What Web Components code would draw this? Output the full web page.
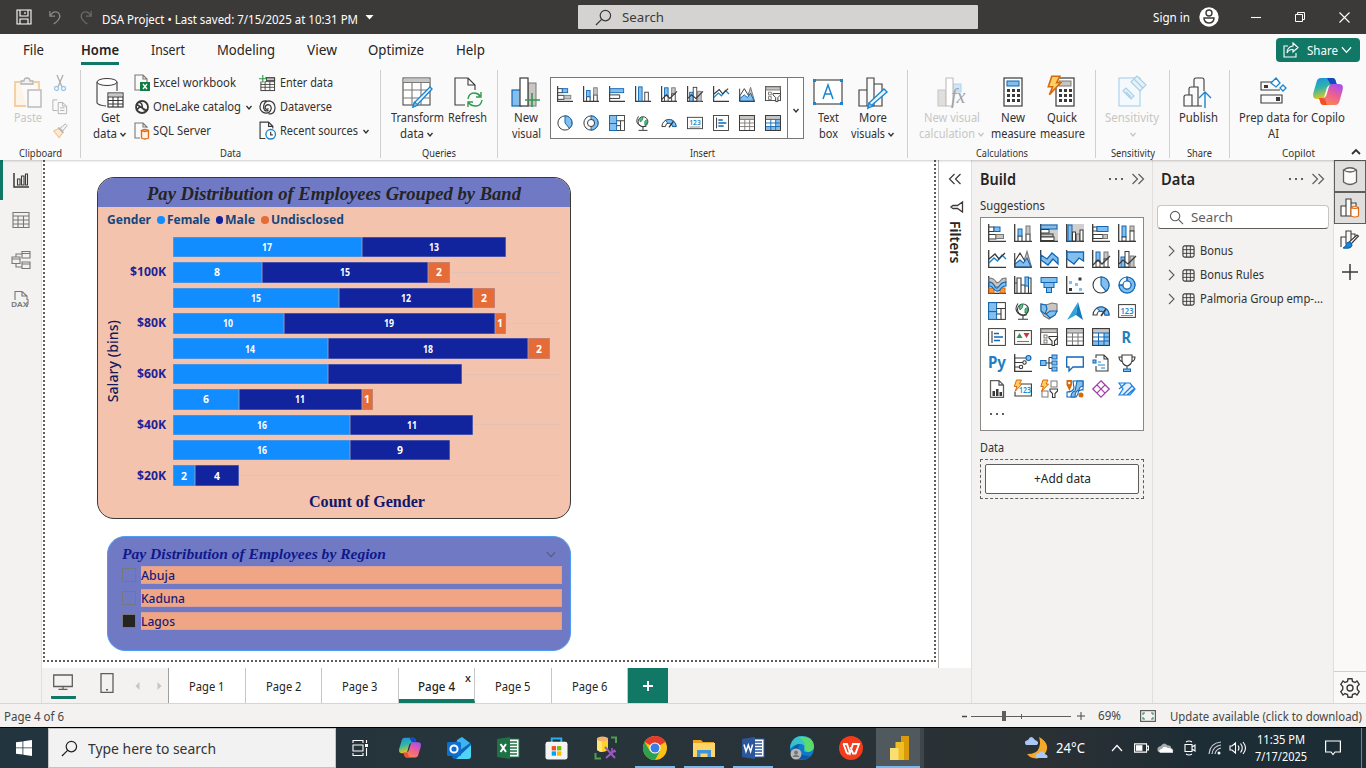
<!DOCTYPE html>
<html lang="en">
<head>
<meta charset="utf-8">
<title>DSA Project</title>
<style>
html,body{margin:0;height:100%;overflow:hidden}
body{font:12px/16px "Noto Sans","Open Sans",sans-serif;color:#323130;background:#f3f2f1}
</style>
</head>
<body>
<report-app></report-app>
<script>
const K='#3b3a39',B='#0f67b5',F='#83beec',G='#c8c6c4',S='#7a7876',N='none';
const r=(x,y,w,h,f=N,s=N,sw=1)=>`<rect x="${x}" y="${y}" width="${w}" height="${h}" fill="${f}" stroke="${s}" stroke-width="${sw}"/>`;
const p=(d,s=K,f=N,w=1.1)=>`<path d="${d}" stroke="${s}" fill="${f}" stroke-width="${w}"/>`;
const c=(x,y,q,f=N,s=N,w=1.1)=>`<circle cx="${x}" cy="${y}" r="${q}" fill="${f}" stroke="${s}" stroke-width="${w}"/>`;
const ax=p('M.7 0V17.3H18',K,N,1.3);
const bolt=(x,y)=>`<path transform="translate(${x} ${y})" d="M3 .5H8L6 4.5H8.5L1.5 12L3.5 7H.8Z" fill="#fcd066" stroke="#d8690a"/>`;
const copilot=(id)=>`<defs><linearGradient id="${id}a" x1="0" y1="0" x2=".3" y2="1"><stop offset="0" stop-color="#1f8be8"/><stop offset=".5" stop-color="#2fb5a8"/><stop offset="1" stop-color="#e8c71f"/></linearGradient><linearGradient id="${id}b" x1=".8" y1="0" x2=".3" y2="1"><stop offset="0" stop-color="#a64ff0"/><stop offset=".5" stop-color="#ee5f92"/><stop offset="1" stop-color="#fb8a4c"/></linearGradient></defs>
<path d="M8 1H19C22 1 22.5 3 23 5L24 8H18C15 8 14 10 13.200 13L11.500 19C11 21 10 22 8 22H4C0 22-.5 19 .6 15L3.500 5C4.200 2.500 5.500 1 8 1Z" fill="url(#${id}a)"/><path d="M14 1H19C22 1 22.500 3 23 5L24 8H19.500C18 8 17 7 16.500 5.500Z" fill="#1549c0"/><path d="M22 28H11C8 28 7.500 26 7 24L6 21H9C12 21 13 19.500 13.800 17L16 9.500C16.600 8 17.500 7 19.500 7H26C30 7 30.500 10 29.400 14L26.500 24C25.800 26.500 24.500 28 22 28Z" fill="url(#${id}b)"/><path d="M12 22L14 28H11C8 28 7.500 26 7 24L6 21H9Z" fill="#f0502c"/>`;
const tableI=(last)=>r(.6,.6,16.8,16.8,'#fff',K)+(last?r(12,5,5,12,F)+r(1,13,12,4,F):'')+r(1,1,16,4,G)+p('M.6 5H17.400M.6 9H17.400M.6 13H17.400M6.500 5V17.400M12 5V17.400',last?B:S,N,1)+r(.6,.6,16.8,16.8,N,K);
const funnelS=p('M9 8.500H17.500V10L14.500 13V17.500H12V13L9 10Z',K,'#fff');
const lab123=(x,y,s,w)=>`<text x="${x}" y="${y}" font-size="${s}" font-weight="600" font-family="Noto Sans" textLength="${w}" lengthAdjust="spacingAndGlyphs" fill="#1a86d0">123</text>`;
const ICONS={
stackbar:[18,18,ax+p('M1 3H6V7.500H1M1 10.500H8V15H1')+r(6,3,6,4.500,F,B)+r(8,10.500,7.500,4,G,S)],
stackcol:[18,18,ax+p('M4 17V12H8V17M12 17V10H16V17')+r(4,5,4,7,F,B)+r(12,2,4,8,G,S)],
clusbar:[18,18,r(0,0,18,18,'#d2d0ce')+ax+r(1,1,16,4,F,B)+r(1,5.500,8,3.500,'#fff',K)+r(1,10,12,3,G,K)+r(1,13,13,3.500,'#fff',K)],
cluscol:[18,18,r(0,0,18,18,'#d2d0ce')+ax+r(2,1,4,16,F,B)+r(6.500,8,3,9,'#fff',K)+r(10.500,10,3,7,G,S)+r(14,6,3,11,'#fff',K)],
bar2:[18,18,ax+r(1,3,15.500,4.500,F,B)+p('M1 10H12V14H1')],
col2:[18,18,ax+r(4,1,4,16,F,B)+r(11,7,4,10,'#fff',K)],
bar100:[18,18,ax+r(1,3,4,4,'#fff',K)+r(5,2.500,11,5,F,B)+r(1,10.500,10,4,'#fff',K)+r(11,10.500,4.500,4,G,S)],
col100:[18,18,ax+r(4,2,4,11,F,B)+r(4,13,4,4,'#fff',K)+r(12,2,4,5,G,S)+r(12,7,4,10,'#fff',K)],
line:[18,18,ax+p('M1 13L6 8L9.500 11L14 5L18 9','#1a86d0',N,1.400)+p('M1 9L7 4L11 9L17 3',K,N,1.300)],
area:[18,18,p('M8 17L13 1.500L17.500 17Z',S,G)+p('M1 11L6 3L12 13V17H1Z',K,'#fff')+p('M1 17V14L6 10L9.500 13L13 8L17 17Z',B,F)+p('M.7 3V17.300H18')],
sarea:[18,18,ax+p('M1 5L7 9L12 3L18 8V14L13 9L8 15L1 10Z',B,F,1.3)],
area100:[18,18,ax+p('M1 2H17.500V11L13 8L8 14L1 9Z',B,F,1.3)],
linestack:[18,18,ax+r(4,2,4,9,F,B)+r(12,2,4,7,G,S)+r(4,11,4,6,'#fff',K)+r(12,9,4,8,'#fff',K)+p('M1 15L6 10L10 14L18 6',K,N,1.3)],
linecol:[18,18,ax+r(3,7,4,10,F,B)+r(7,1.500,4,15.500,'#fff',K)+r(12,6,4,11,G,S)+p('M1 14L5 10L10 14L18 6',K,N,1.3)],
ribbon:[18,18,ax+r(1,12,5,5,'#f29a3f','#d8690a')+r(12,12,5,5,'#f29a3f','#d8690a')+p('M1 2Q6 2 8 6Q10 8 13 4Q14 2 18 2V6Q14 7 12 10Q8 13 5 8Q4 6 1 6Z',S,G)+p('M1 6Q5 6 7 11Q9 14 12 9Q14 6 18 6V10Q14 10 12 14Q8 17 5 12Q4 10 1 10Z',B,F)],
waterfall:[18,18,ax+p('M3 17V2H7V17M3 7H1M11 17V9H7M11 9V17M14.500 17V2H17V17')+r(11,1,3.500,9,F,B)],
funnel:[18,18,r(1,1.500,16,5,F,B)+r(4,6.500,10,5,F,B)+r(6.500,11.500,5,5,F,B)],
scatter:[18,18,ax+r(3,5,3,3,F)+r(9,7,3,3,F)+r(13,12,3,3,F)+r(12.500,1.500,3,3,K)+r(3,12,3,3,K)],
pie:[18,18,c(9,9,8,'#fff',K)+p('M9 9V1A8 8 0 0 1 14 15.200Z',B,F)],
donut:[18,18,c(9,9,8,'#fff',B)+p('M9 1A8 8 0 1 1 1 9H5A4 4 0 1 0 9 5Z',B,F)+c(9,9,4,'#fff',B)+p('M9 1V5M1 9H5',B)],
donut2:[18,18,c(9,9,8,'#fff',K)+p('M9 1A8 8 0 0 1 9 17V13A4 4 0 0 0 9 5Z',B,F)+c(9,9,4,'#fff',K)],
treemap:[18,18,r(.6,.6,16.800,16.800,'#fff',K)+r(.6,.6,8,9,F,B)+r(.6,9.600,8,7.800,F,B)+p('M8.600 6.500H17.400M13 6.500V17.400M8.600 12H13')],
globe:[18,18,c(9,7.500,5.500,'#fff',K)+p('M5 4Q8 1 9 3Q9 6 6 8ZM11 7Q14 4 14 7Q14 11 11 11Z','#107c41','#5cc08a',.8)+p('M4 1.500Q0 7 4 11Q8 15 13 12.500M9 13V17M4 17.300H14')],
fmap:[18,18,p('M1 2L6 3L12 1L17 2V9L13 14L9 17L4 14L1 9Z',S,G)+p('M1 2L6 3L7 7L5 12L1 9ZM10 9H17L15 13L10 16L6 12Z',B,F)],
azure:[18,18,`<path d="M12 0L1 18L10 13Z" fill="#2fa4dc"/><path d="M12 0L17 18L10 13Z" fill="#1479b8"/>`],
gauge:[18,18,p('M1 13A8 8 0 0 1 17 13H13A4 4 0 0 0 5 13Z',K,'#fff')+p('M5 6A8 8 0 0 1 17 13H13A4 4 0 0 0 8 9.500Z',B,F)+p('M9 14L14 7',K,N,1.600)],
card:[18,18,r(.6,2.600,16.800,12.800,'#fff',K)+lab123(2.5,11.500,8,13)+p('M3 13.500H15',S,N,.9)],
multirow:[18,18,r(.6,.6,16.800,16.800,'#fff',K)+p('M4 3V15',K)+p('M6 5.500H11M6 9H15M6 12.500H12',B,N,1.700)],
kpi:[18,18,r(.6,2.600,16.800,13.800,'#fff',K)+`<path d="M2.500 10L5.500 5L8.500 10Z" fill="#2e9a4b"/><path d="M9.500 5H15.500L12.500 10Z" fill="#d13438"/>`+p('M3 13.500H15',S)],
slicer:[18,18,r(.6,.6,16.800,15.800,'#fff',K)+r(1,1,16,3.500,G,S)+r(4,7,3,3,N,S)+r(4,12,3,3,N,S)+funnelS],
table:[18,18,tableI(0)],matrix:[18,18,tableI(1)],
R:[18,18,`<text x="3.500" y="14.500" font-size="15.500" font-weight="700" font-family="Noto Sans" textLength="9.500" lengthAdjust="spacingAndGlyphs" fill="#1f7fc2">R</text>`],
Py:[18,18,`<text x="0" y="14" font-size="15.500" font-weight="700" font-family="Noto Sans" textLength="18" lengthAdjust="spacingAndGlyphs" fill="#1f7fc2">Py</text>`],
keyinf:[18,18,ax+p('M1 4H13M1 8.500H9M1 13H6',K)+c(14.500,4,2.500,F,B)+c(10.500,8.500,1.700,'#fff',K)+c(7,13,1.700,'#fff',K)],
decomp:[18,18,p('M6 9H9M9 3.500V14.500M9 3.500H12M9 9H12M9 14.500H12')+r(.6,6.500,5.400,5,F,B)+r(12,1,5,4,F,B)+r(12,7,5,4,F,B)+r(12,13,5,4,F,B)],
qna:[18,18,p('M.7 3H17.300V13H7L3 17V13H.7Z',B,'#fff',1.300)],
narr:[18,18,p('M4 4V1H12L16 5V17H4V12M12 1V5H16',K)+r(1,6,3,3,F,B)+p('M6 8H9M6 11H13M9 14H13','#1a86d0')],
trophy:[18,18,p('M4 1H14V7Q13 11 9 12Q5 11 4 7ZM4 3H1Q1 7 5 8M14 3H17Q17 7 13 8M9 12V15')+r(5.500,15,7,2.500,F,B)],
pagin:[18,18,p('M2.500 .6H11L15.500 5V17.400H2.500ZM11 1V5H15','#605e5c','#fff',1.300)+r(4.500,11,2.500,5,K)+r(8,9,2.500,7,K)+r(11.500,12,2.500,4,K)],
cardn:[18,18,p('M7 4H17.400V16H1V12',K,'#fff')+lab123(5,13,9,12)+bolt(-.5,-.5)],
slicern:[18,18,r(11,1,6,6,'#fff',S)+r(2,11,6,6,'#fff',S)+p('M10 9H17.500V11L15 13.500V17.500H12.500V13.500L10 11Z',K,'#fff')+bolt(0,-.5)],
arcgis:[18,18,p('M7 1H17V10Q12 9 12 14L10 17H1V12Q7 12 8 8Z',B,'#fff')+p('M11 1H17V6Q13 7 13 10Q9 11 9 17H5Q5 12 9 11Z',B,F)+`<path d="M.5 0H6V5L3.500 11L.5 5Z" fill="#d8690a"/>`+c(3.200,3,1.200,'#fff')+c(15,15,2.500,'#d8690a')],
papps:[18,18,`<path d="M9 .8L17.200 9L9 17.200L.8 9ZM4.900 4.900L13.100 13.100M13.100 4.900L4.900 13.100" fill="#fff" stroke="#a33fa8" stroke-width="1.300"/>`],
automate:[18,18,p('M1 3H12L17 9L12 15H1L5 9ZM1 9L8 3M5 15L14 6M9 15L16 9','#1a7fe0','#e5f1fd',1.200)],
// ribbon
paste:[30,32,p('M7 5H2V29H13M21 5H26V12','#f4cda0','#fdf3e6',1.800)+p('M8 7V4H11Q11 1 14 1Q17 1 17 4H20V7Z','#b5b3b1','#f3f2f1',1.300)+r(15,13,13,17,'#fafafa','#b5b3b1',1.300)],
cut:[16,18,p('M5 1L10 13M11 1L6 13','#b0aeac',N,1.300)+c(4.500,14.500,2,N,'#9fc8e8',1.300)+c(11.500,14.500,2,N,'#9fc8e8',1.300)],
copy:[18,18,p('M6 13H1V1H6','#b5b3b1')+p('M7 4H12L16.500 8V16.500H7ZM12 4V8H16M9 10H14M9 13H14','#b5b3b1')],
brush:[18,18,p('M2 9L8 6L12 11L8 16.500Z','#f2c391','#fce9d2',1.300)+p('M9 6L15 1L17 3L12 9Z','#b5b3b1','#f3f2f1')+p('M7 5L13 11','#b5b3b1',N,1.500)],
getdata:[30,32,p('M2 5V26Q4 28.500 11 29M22 5V14')+`<ellipse cx="12" cy="5" rx="10" ry="3.500" fill="#fff" stroke="${K}"/>`+r(13,16,15,14,'#fff',K,1.200)+r(13.500,16.500,14,3,G)+p('M13 20H28M13 23.500H28M13 27H28M18 20V30M23 20V30')],
excel:[16,18,p('M6 16H1V1H9L13 5V8M9 1V5H13',S)+r(6,8,10,9,'#107c41')+p('M9 10L13 15M13 10L9 15','#fff',N,1.300)],
onelake:[16,18,c(8,9,6,N,K,1.800)+p('M2 6L13 13M4 4Q9 5 8 9Q10 14 14 11M3 12Q5 8 9 9',K,N,1.500)],
sql:[16,18,p('M6 16H1V1H9L13 5V6M9 1V5H13',S)+p('M7.500 8.500V16Q11 18 14.500 16V8.500Q11 10.500 7.500 8.500Q11 6.500 14.500 8.500','#e06c12','#fdf0e4',1.300)],
enter:[18,18,r(2,3,14.500,13.500,'#fff',K)+r(8,3,8.500,3,G,K)+p('M2 7H16.500M2 10H16.500M2 13H16.500M6.500 7V16.500M11.500 7V16.500',K,N,.9)+r(0,0,6.500,7,'#fafafa')+p('M4 0V8M0 4H8','#2e9a4b',N,1.200)],
dverse:[18,18,p('M8 2Q2 1 1 8Q1 14 7 15Q12 15 13 10Q13 6 9 6Q6 7 6.500 10Q8 12 10 10M10 15.500Q16 17 17 10Q17 3 11 2Q6 2 5 7Q4 10 6 12Q8 13 10 12',K,N,1.300)],
recent:[16,18,p('M6 16.500H1V1H9L13 5V7M9 1V5H13')+c(11,12.500,4.500,'#fff','#1a86d0',1.300)+p('M11 10V13H13',K)],
transform:[30,32,r(1,1,27,27,'#fff',K)+r(1.500,1.500,26,3.500,G)+p('M1 5.500H28M1 13H28M1 21H28M10 5V28M19 5V28',S)+p('M28 10L30 12L15 28L11 30L12 26Z','#1a86d0','#eaf5fd',1.400)+p('M11 30L12.500 25L16 28Z','#1a86d0',F)],
refresh:[30,32,p('M13 28H3V1H16L23 8V13M16 1V8H23')+p('M16 22Q17 16 22 16Q26 16 28 19M29 15V20H24M30 23Q29 29 24 29Q19 29 17 26M16 30V25H21','#2e9a4b',N,1.400)],
newvis:[30,32,r(1,13,9,16,F,B,1.200)+r(17,6,8,23,G,S)+r(9,1,8,28,'#fff',K,1.200)+p('M21 16V30M14 23H29','#2e9a4b',N,1.600)],
textbox:[30,32,r(1,3,28,24,'#fff',K,1.100)+r(0,2,3,3,'#1a86d0')+r(27,2,3,3,'#1a86d0')+r(0,25,3,3,'#1a86d0')+r(27,25,3,3,'#1a86d0')+p('M10 22L15 8L20 22M12 17H18','#1a86d0',N,1.500)],
morevis:[30,32,p('M1 29V13H9V29ZM9 13V1H16V29H9M16 7H24V29H16')+p('M26 12L29 15L14 28L10 31L11 26Z','#1a86d0','#eaf5fd',1.400)+p('M10 31L11 26L15 29Z','#1a86d0',F)],
newcalc:[30,32,p('M1 29V13H9V29Z','#c8c6c4','#e1dfdd')+p('M16 7H24V15H16Z','#b0d4ee','#cfe6f7')+p('M9 13V1H16V29H9Z','#c0bebc','#fff')+`<text x="14" y="26" font-family="Liberation Serif" font-style="italic" font-size="20" fill="#a5a3a1">fx</text>`],
calc:[30,32,r(6,1,18,28,'#fff',K,1.200)+r(9,4,12,5,F,B)+[13,18,23].map(y=>[9,14,19].map(x=>r(x,y-1,3,3,K)).join('')).join('')],
quick:[30,32,r(9,1,18,28,'#fff',K,1.200)+r(12,4,12,5,G,S)+[13,18,23].map(y=>[12,17,22].map(x=>r(x,y-1,3,3,K)).join('')).join('')+`<g transform="translate(0 -1.500) scale(1.600)">${bolt(0,0)}</g>`],
sens:[30,32,r(2,1,21,28,'#f4f9fd','#a9cfe8',1.100)+p('M17 2L20 -1L29 8L26 11ZM14 5L17 2L26 11L23 14Z','#a9cfe8','#e6f2fa',1.200)+p('M6 14L9 11L17 19L14 22ZM9 15L14 20','#a9cfe8','#e6f2fa')],
publish:[30,32,p('M1 29V20Q1 18 3 18H9V29ZM6 18V12Q6 10 8 10H15V29H9M11 10V3Q11 1 13 1H19Q21 1 21 3V14M15 29H19')+p('M22 31V16M16 21L22 15L28 21','#1a86d0',N,1.400)],
prep:[30,32,p('M17 5H3V13H22M3 18H24V26H3Z',K)+r(6,8,4,3,K)+r(18,20,4,4,K)+p('M18 1L22 6L18 10L13 6ZM25 8L28 11L25 14L22 11Z','#1a86d0','#fff',1.300)],
copilot:[30,30,copilot('c')],
// window
save:[16,16,p('M1 1H15V15H1ZM4 1V7H12V1M4 15V10H12V15M9 3V5','#fff')],
undo:[16,16,p('M2 1V6.500H7.500M2 6.500Q6 0 11 3Q16 8 6 15','#8a8886',N,1.300)],
redo:[16,16,p('M14 1V6.500H8.500M14 6.500Q10 0 5 3Q0 8 10 15','#6b6967',N,1.300)],
mag:[18,18,c(11,7,5.500,N,'currentColor',1.300)+p('M7 11L1 17','currentColor',N,1.300)],
mag2:[16,16,c(6.500,6.500,5,N,'currentColor',1.200)+p('M10 10L15 15','currentColor',N,1.200)],
user:[20,20,c(10,10,9.700,'#fff')+c(10,6,3,N,K,1.400)+p('M5 11H15V12Q14 16 10 16Q6 16 5 12Z',K,N,1.400)],
min:[10,10,p('M0 5.500H10','#fff')],max:[10,10,p('M.5 2.500H7.500V9.500H.5ZM2.500 2V.5H9.500V7.500H8','#fff',N,1)],close:[11,11,p('M.5 .5L10.500 10.500M10.500 .5L.5 10.500','#fff')],
caret:[8,5,`<path d="M0 0H8L4 4.500Z" fill="#fff"/>`],
chev:[8,6,p('M1.500 1L4 4L6.500 1','currentColor',N,1.300)],
chevw:[12,8,p('M1 1L6 6.500L11 1','currentColor',N,1.300)],
chevup:[10,7,p('M1 6L5 2L9 6','currentColor',N,1.800)],
share:[16,16,p('M5 4H1V15H13V11','#fff')+p('M10 1L15 5.500L10 10V7.500Q6 7 4 11Q4 5 10 4Z','#fff')],
// rails
rpt:[16,16,p('M1 1V15H16',K,N,1.500)+p('M4.500 13V7H7V13ZM8.500 13V4H11V13ZM12.500 13V2H14.500V13Z')],
rtable:[18,18,p('M1 1.500H17V16.500H1ZM1 5H17M1 9H17M1 13H17M6 5V16.500M11.500 5V16.500','#797775',N,1.100)],
model:[20,20,p('M11 1.500H19V8H11ZM11 12H19V18.500H11ZM1 7H9V13.500H1ZM11 3.500H19M11 14H19M1 9H9M5 7V4H11M5 13.500V17H11','#797775')],
dax:[20,20,p('M4 10V1.500H11L16 6V10M11 2V6H16','#797775')+`<text x="0" y="16.500" font-size="7.500" font-weight="600" font-family="Noto Sans" textLength="17" lengthAdjust="spacingAndGlyphs" fill="#797775">DAX</text>`+p('M17 9V14L15 17','#797775')],
desk:[20,16,p('M.7 1H19.300V12.500H.7ZM10 12.500V15.300M5.500 15.300H14.500','#605e5c',N,1.300)],
phone:[14,20,p('M1 .7H13V19.300H1Z','#605e5c',N,1.300)+r(6,16,2,1.500,'#605e5c')],
tril:[5,8,`<path d="M4.500 0V8L.5 4Z" fill="#c8c6c4"/>`],trir:[5,8,`<path d="M.5 0V8L4.500 4Z" fill="#c8c6c4"/>`],
dl:[14,12,p('M6.500 1L1.500 6L6.500 11M12.500 1L7.500 6L12.500 11','#3b3a39',N,1.200)],
dr:[14,12,p('M1.500 1L6.500 6L1.500 11M7.500 1L12.500 6L7.500 11','#605e5c',N,1.200)],
filt:[14,12,p('M12.500 1V11L7.500 7.500H3L1 6L3 4.500H7.500Z',K,N,1.300)],
dots:[16,4,r(1,1,2,2,'#605e5c')+r(7,1,2,2,'#605e5c')+r(13,1,2,2,'#605e5c')],
chr:[7,12,p('M1 1L6 6L1 11','#605e5c',N,1.100)],
grid:[14,14,`<rect x="1" y="1" width="12" height="12" rx="2" fill="none" stroke="${K}" stroke-width="1.200"/>`+p('M1 5H13M1 9H13M5 1V13M9 1V13',K,N,1)],
cyl:[16,20,p('M1.500 4V16Q8 21 14.500 16V4Q8 -.5 1.500 4Q8 8 14.500 4','#605e5c','#fafafa',1.300)],
bld:[20,20,p('M1 18V8H6V18ZM6 8V1H11V18H6M11 5H16V8',K,'#fff')+p('M11 9.500V18Q15 20 18.500 18V9.500Q15 7.500 11 9.500Q15 11.500 18.500 9.500','#e06c12','#fff',1.200)],
fmt:[20,20,p('M1 17V7H6V14M6 7V1H11V12M11 4H15V8')+p('M18.500 6L11 14L8 13L17 5Z',K,'#fff')+p('M10 12L12 15Q11 19 3 18Q6 17 7 13Z','#0f67b5','#1a86d0')],
plus:[18,18,p('M9 1V17M1 9H17',K,N,1.500)],
gear:[20,20,p('M7.500 3.500L8 .8H12L12.500 3.500L15 4.500L17 3L19.200 6.500L17.300 8.500V11.500L19.200 13.500L17 17L15 15.500L12.500 16.500L12 19.200H8L7.500 16.500L5 15.500L3 17L.8 13.500L2.700 11.500V8.500L.8 6.500L3 3L5 4.500Z',K,N,1.400)+c(10,10,3,N,K,1.400)],
fit:[16,12,r(.6,.6,14.800,10.800,N,'#605e5c',1.200)+p('M3 5V3H5M11 3H13V5M13 7V9H11M5 9H3V7','#2e8a5b')],
// taskbar
win:[16,16,`<path d="M0 2.300L6.500 1.400V7.500H0ZM7.300 1.300L16 0V7.500H7.300ZM0 8.300H6.500V14.600L0 13.700ZM7.300 8.300H16V16L7.300 14.700Z" fill="#fff"/>`],
tview:[17,16,p('M1 3V.5H11V3M1 13V15.500H11V13M1 5H11V11H1ZM14.500 0V3M14.500 8V16','#fff')+r(13,4,3,3,'#fff')],
outlook:[24,24,`<path d="M5 8L15 1L24 8V20Q24 23 21 23H8Q5 23 5 20Z" fill="#1066b8"/><path d="M10 4L15 1L23 7L12 15Z" fill="#3bb4f2"/><path d="M24 9V20Q24 23 21 23H9Z" fill="#4fd3f7"/><rect y="6" width="14" height="14" rx="1.500" fill="#0f6fd0"/>`+c(7,13,3.600,N,'#fff',2)],
xl:[24,24,r(12,3,11,18,'#fff','#1e7145')+p('M14 6H21M14 9H21M14 12H21M14 15H21M14 18H21','#1e7145',N,1.600)+`<path d="M1 3L14 1V23L1 21Z" fill="#1e7145"/>`+p('M4.500 8L10 16M10 8L4.500 16','#fff',N,2)],
store:[24,24,p('M7 6V1.500H17V6','#29b0ee',N,2)+`<rect x=".5" y="5" width="23" height="18.500" rx="2.500" fill="#f4f4f4"/>`+r(7,9.500,4.500,4.500,'#f25022')+r(12.500,9.500,4.500,4.500,'#7fba00')+r(7,15,4.500,4.500,'#00a4ef')+r(12.500,15,4.500,4.500,'#ffb900')],
ssms:[24,24,`<path d="M3 3V14Q8 18 14 14V3Z" fill="#fbd32e"/><path d="M3 3V14Q5.500 16 8 16V3Z" fill="#fde57a"/><ellipse cx="8.500" cy="3" rx="5.700" ry="2.500" fill="#f2b36c"/>`+p('M17 1.500H22V7M1.500 17V22.500H7','#4f9e4c',N,2)+p('M11 11L21 22M21 14L12 22','#9b59c0',N,2)+p('M18 12V15.500H22','#9b59c0',N,1.600)],
chrome:[24,24,c(12,12,12,'#fbc116')+`<path d="M12 12L1.600 6A12 12 0 0 1 22.400 6Z" fill="#e33b2e"/><path d="M12 0A12 12 0 0 1 22.400 6H12Z" fill="#e33b2e"/><path d="M1.600 6A12 12 0 0 0 12 24L17 15L12 12L7 15Z" fill="#2da14c"/>`+c(12,12,5.600,'#fff')+c(12,12,4.500,'#3b7de8')],
folder:[24,24,`<path d="M1 4H9L11 6H22V20H1Z" fill="#eca21c"/><rect x="1" y="7" width="22" height="14" fill="#fcd669"/><path d="M5 21V14H19V21H15.500V17.500H8.500V21Z" fill="#3f94dc"/>`],
word:[24,24,r(12,3,11,18,'#fff','#2b579a')+p('M14 6H21M14 9H21M14 12H21M14 15H21M14 18H21','#2b579a',N,1.400)+`<path d="M1 3L14 1V23L1 21Z" fill="#2b579a"/>`+p('M3 8.500L5 15.500L7.300 9L9.600 15.500L11.600 8.500','#fff',N,1.500)],
edge:[24,24,c(12,12,12,'#1278c8')+`<path d="M.5 9Q3 0 12 0Q23 0 24 10Q24 16 17 16Q13 16 14.500 13Q15 8 10 8Q4 8 .2 13Z" fill="#36c3c9"/><path d="M14 1Q23 2 24 10Q24 15 18 16L14.500 13Q17 5 8 1Z" fill="#5bdb6c"/><path d="M8 12Q10 21 20 20Q16 24 11 23.500Q2 22 2 14Q6 8 10 8Q8 10 8 12Z" fill="#0d56a6"/>`+c(6,18,5.500,'#b8b8b8')+c(6,16.500,2,'#777')+p('M3 21Q6 17 9 21','#777','#777')],
wps:[24,24,c(12,12,12,'#f33c1c')+p('M4 8H8L11 17L14 8H20L16.500 17.500H14L11.500 11M8 17.500H11M4.500 8L8 17.500','#fff',N,1.900)],
pbi:[20,24,r(11,0,8,24,'#d99a0c')+r(5.500,6,8.500,18,'#f0bf25')+r(0,12,8.500,12,'#f9de72')],
moon:[24,24,`<path d="M15 1Q26 7 22 16Q18 24 9 22Q5 21 3 18Q13 18 15 12Q17 7 15 1Z" fill="#f4a92a"/><path d="M2 9Q-1 5 4 4Q7-2 11 4Q16 6 13 9Z" fill="#a9c8f5"/><path d="M12 22Q10 18 15 17Q19 13 21 18Q25 20 23 22Z" fill="#a9c8f5"/>`],
up:[12,8,p('M1 7L6 1.500L11 7','#fff',N,1.200)],
batt:[16,10,p('M.6 .6H13.400V9.400H.6ZM13.400 3H15.400V7H13.400','#fff')+r(2,2,7,6,'#fff')],
cloud:[18,12,`<path d="M1 10Q-1 5 4 4Q7-1 11 3Q15 3 15 6Q19 8 16 10Z" fill="#a5acb0"/><path d="M3 11Q1 8 5 7Q8 3 11 6Q17 6 17 11Z" fill="#fff"/>`],
meet:[14,16,p('M2 4.500H9V11.500H2ZM9 7L12 5V11L9 9M3 2Q6 0 9 2M3 14Q6 16 9 14','#fff')],
wifi:[14,14,p('M1 13Q2 2 13 1M4 13Q5 5 13 4M7 13Q8 8 13 7','#c9ced1',N,1.200)+c(11,12,1.500,'#fff')],
sound:[18,14,p('M1 5H3L6.500 2V12L3 9H1ZM9 4.500Q11 7 9 9.500M11.500 2.500Q15 7 11.500 11.500M14 1Q19 7 14 13','#fff')],
notif:[16,16,p('M.6 1H15.400V12H10L8 14.500L6 12H.6Z','#fff',N,1.200)]
};
const def=(n,css,html)=>customElements.define(n,class extends HTMLElement{
 connectedCallback(){ if(this.shadowRoot) return;
  this.attachShadow({mode:'open'}).innerHTML=`<style>:host{display:block;box-sizing:border-box}*{box-sizing:border-box}${css}</style>`+(typeof html==='function'?html(this):html);}
});
const I=(n,w,h,st='')=>`<ui-icon name="${n}"${w?` w="${w}"`:''}${h?` h="${h}"`:''} style="${st}"></ui-icon>`;
const T=(t,w,st='')=>`<fit-text w="${w}" style="${st}">${t}</fit-text>`;
const row='display:flex;align-items:center;';

def('ui-icon',':host{display:block;flex:none}svg{display:block;overflow:visible}',e=>{
 const [a,b,m]=ICONS[e.getAttribute('name')],w=e.getAttribute('w')||a,h=e.getAttribute('h')||(w*b/a);
 return `<svg width="${w}" height="${h}" viewBox="0 0 ${a} ${b}">${m}</svg>`;});

def('title-bar',`:host{height:34px;background:#3b3a39;color:#fff;${row}padding-left:16px}
.search{width:400px;height:24px;margin:0 0 0 204px;background:#d4d3d1;color:#3b3a39;border-radius:1px;${row}padding-left:17px;font-size:13px}`,
`${I('save')}${I('undo',15,15,'margin-left:16px')}${I('redo',15,15,'margin-left:15px')}
${T('DSA Project • Last saved: 7/15/2025 at 10:31 PM',256,'margin:6px 0 0 9px;')}${I('caret',9,5,'margin-left:7px')}
<div class="search">${I('mag',17)}${T('Search',42,'margin-left:10px')}</div>
${T('Sign in',37,'margin:2px 0 0 175px')}${I('user',20,20,'margin-left:9px')}${I('min',10,10,'margin-left:32px')}${I('max',10,10,'margin-left:34px')}${I('close',11,11,'margin-left:34px')}`);

def('ribbon-tabs',`:host{height:32px;background:#fafafa;display:flex;padding-left:23px;font-size:14px;color:#252423}
.t{height:30.500px;padding-top:8px}.on{font-weight:600;border-bottom:3px solid #117865}
.share{margin:4px 6px 0 auto;width:84px;height:24px;border-radius:4px;background:#117865;color:#fff;${row}padding-left:7px;font-size:13px}`,
[['File',21,0],['Home',38,37],['Insert',34,32],['Modeling',58,32],['View',30,32],['Optimize',56,31],['Help',29,31.500]].map(([t,w,m],i)=>`<div class="t${i==1?' on':''}" style="margin-left:${m}px">${T(t,w)}</div>`).join('')+
`<div class="share">${I('share',16)}${T('Share',31,'margin-left:8px')}${I('chevw',11,8,'margin-left:3px')}</div>`);

def('rb-button',`:host{${row}flex-direction:column;flex:none;height:75px;padding-top:7px}
:host([off]){color:#c8c6c4}.ic{height:33px}.l{height:16px;${row}gap:2px}`,e=>{
 const g=a=>(e.getAttribute(a)||'').split('|'),[a,aw]=g('a'),[b,bw,ch]=g('b');
 return `<div class="ic">${I(e.getAttribute('icon'))}</div><div class="l">${T(a,aw)}</div><div class="l">${b?T(b,bw):''}${ch?I('chev',8,6,'margin-top:2px'):''}</div>`;});
const Bn=(icon,w,ml,a,b='',off='')=>`<rb-button ${off} icon="${icon}" a="${a}" b="${b}" style="width:${w}px;margin-left:${ml}px"></rb-button>`;

def('ribbon-group',`:host{flex:none;height:88px;border-right:1px solid #d2d0ce;margin-top:4px}:host([last]){border:0}
.c{height:75px;display:flex}.cap{display:flex;justify-content:center;font-size:10.500px;line-height:17px}`,
e=>`<div class="c"><slot></slot></div><div class="cap">${T(e.getAttribute('cap'),e.getAttribute('cw'))}</div>`);
const Gp=(w,cap,cw,h,x='')=>`<ribbon-group ${x} cap="${cap}" cw="${cw}" style="width:${w}px">${h}</ribbon-group>`;

def('source-list',`:host{padding-top:1px}.r{height:24px;${row}}`,e=>e.getAttribute('items').split(';').map(s=>{
 const [ic,t,w,ch]=s.split('|'),gap=e.getAttribute('gap');return `<div class="r">${I(ic,gap==3?16:17)}${T(t,w,`margin-left:${gap}px`)}${ch?I('chev',8,6,'margin:2px 0 0 4px'):''}</div>`}).join(''));

def('visual-gallery',`:host{display:flex;flex:none;width:254px;height:62px;margin:7px 0 0 4px;border:1px solid #797775;background:#fff}
.g{width:237px;padding-left:1px;display:grid;grid-template-columns:repeat(9,26px);grid-auto-rows:29px;place-items:center;padding-top:1px}
.m{width:16px;border-left:1px solid #797775;${row}justify-content:center;padding-top:5px}`,
`<div class="g">${'stackbar,stackcol,bar2,col2,linestack,linecol,line,area,slicer,pie,donut2,treemap,globe,gauge,card,multirow,table,matrix'.split(',').map(n=>I(n,16)).join('')}</div><div class="m">${I('chev')}</div>`);

def('ribbon-bar',`:host{height:94px;background:#fafafa;display:flex;position:relative;box-shadow:0 2px 2px -1px rgba(0,0,0,.2);z-index:2}
.sm{padding-top:1px}.sm div{height:24px;width:20px;${row}justify-content:center;margin-left:-6px}
.up{position:absolute;right:5px;bottom:5px}`,
Gp(81,'Clipboard',43,Bn('paste',56,0,'Paste|28','','off')+`<div class="sm">${['cut','copy','brush'].map(n=>`<div>${I(n,16)}</div>`).join('')}</div>`)+
Gp(300,'Data',21,Bn('getdata',44,7,'Get|19','data|24|1')+`<source-list style="width:125px;margin-left:2px" gap="3" items="excel|Excel workbook|83;onelake|OneLake catalog|88|1;sql|SQL Server|58"></source-list><source-list gap="4" items="enter|Enter data|53;dverse|Dataverse|52;recent|Recent sources|78|1"></source-list>`)+
Gp(117,'Queries',34,Bn('transform',60,6,'Transform|53','data|24|1')+Bn('refresh',40,0,'Refresh|39'))+
Gp(410,'Insert',25,Bn('newvis',40,8,'New|24','visual|29')+'<visual-gallery></visual-gallery>'+Bn('textbox',36,6,'Text|21','box|19')+Bn('morevis',50,2,'More|28','visuals|34|1'))+
Gp(188,'Calculations',52,Bn('newcalc',72,8,'New visual|56','calculation|56|1','off')+Bn('calc',48,1,'New|24','measure|45')+Bn('quick',48,1,'Quick|30','measure|45'))+
Gp(74,'Sensitivity',44,Bn('sens',60,6,'Sensitivity|54',' |0|1','off'))+
Gp(60,'Share',25,Bn('publish',50,3,'Publish|39'))+
Gp(136,'Copilot',33,Bn('prep',72,7,'Prep data for|69','AI|11')+Bn('copilot',36,1,'Copilo|34'),'last')+
`<div class="up">${I('chevup')}</div>`);

def('view-rail',`:host{width:42px;background:#f3f2f1;border-right:1px solid #e1dfdd}.i{height:40px;${row}justify-content:center;padding-right:0}.on{border-left:3px solid #117865;padding-right:3px}`,
['rpt','rtable','model','dax'].map((n,i)=>`<div class="i${i?'':' on'}">${I(n)}</div>`).join(''));

def('pay-chart',`:host{width:474px;height:342px;border:1px solid #3b3a39;border-radius:17px;background:#f4c3ae;overflow:hidden}
.h{height:29px;background:#707ac4;${row}justify-content:center;color:#252423;font:italic bold 19px "Liberation Serif",serif;padding-top:2px}
.lg{${row}height:26px;padding-left:9px;font-weight:700;font-size:12.500px;color:#14477d}
.d{width:7.500px;height:7.500px;border-radius:50%;margin-left:6px;margin-right:2px}
.b{display:flex;height:254px;margin-top:1.400px}.y{width:30px;${row}justify-content:center}.y span{writing-mode:vertical-rl;transform:rotate(180deg);font-size:14px;font-weight:500;color:#101a5c;letter-spacing:.08px;padding-right:0;margin-bottom:1px}
.rows{flex:1}.r{height:25.400px;display:flex;align-items:center;color:#fff;font-weight:700;font-size:10.500px}
.l{width:38px;margin-right:6.700px;display:flex;justify-content:flex-end;color:#1c2396;font-size:12px;font-weight:700}
.s{height:20.500px;${row}justify-content:center;box-shadow:inset 0 0 0 .6px rgba(160,160,190,.75);flex:none}
.g{flex:1;margin:0 11px 0 2px;border-top:1px dotted #dcbdb0}
.x{${row}justify-content:center;color:#10186c;font:bold 16px "Liberation Serif",serif;padding:4.500px 0 0 65px}`,()=>{
 const cs=['#118dff','#12239e','#e66c37'],d=[[17,13],[8,15,2,'$100K'],[15,12,2],[10,19,1,'$80K'],[14,18,2],[-14,-12,0,'$60K'],[6,11,1],[16,11,0,'$40K'],[16,9],[2,4,0,'$20K']];
 return `<div class="h">${T('Pay Distribution of Employees Grouped by Band',374)}</div>
 <div class="lg">${T('Gender',44)}${[['Female',43],['Male',30],['Undisclosed',73]].map(([t,w],i)=>`<i class="d" style="background:${cs[i]}"></i>${T(t,w)}`).join('')}</div>
 <div class="b"><div class="y"><span>Salary (bins)</span></div><div class="rows">${d.map(q=>`<div class="r"><div class="l">${q[3]?T(q[3],q[3].length>4?36:29):''}</div>${q.slice(0,3).map((v,i)=>v?`<div class="s" style="width:${Math.abs(v)*11.110}px;background:${cs[i]}">${v>0?T(v,v>9?10:6):''}</div>`:'').join('')}${q[3]?'<div class="g"></div>':''}</div>`).join('')}</div></div>
 <div class="x">${T('Count of Gender',116)}</div>`;});

def('region-slicer',`:host{width:464px;height:115px;margin:17px 0 0 10px;border:1px solid #4f9cf0;border-radius:18px;background:#707ac4;padding:8px 8px 0 14px;color:#1a1c78}
.h{${row}justify-content:space-between;height:18px;font:italic bold 15px "Liberation Serif",serif;color:#10188a;padding-right:6px}
.r{${row}height:23px;font-size:13px;font-weight:500}.k{width:14px;height:14px;border:1px solid #77777f;margin-right:5px}.on{background:#252423}
.v{flex:1;height:18px;background:#f0a585;border:1px solid #d9a09a;border-left:0;${row}}`,
`<div class="h">${T('Pay Distribution of Employees by Region',264)}${I('chevw',10,7,'color:#55587a')}</div>`+[['Abuja',34],['Kaduna',44],['Lagos',34]].map(([t,w],i)=>`<div class="r"><div class="k${i==2?' on':''}"></div><div class="v">${T(t,w)}</div></div>`).join(''));

def('report-canvas',`:host{width:897px;height:508px;background:#fff;border-right:1px solid #b3b0ad;display:flex;padding:0 2px 6px 1px}
.p{flex:1;padding:17px 0 0 54px;
background:repeating-linear-gradient(#605e5c 0 2px,transparent 2px 4px) 0 0/2px 100% no-repeat,repeating-linear-gradient(#605e5c 0 2px,transparent 2px 4px) 100% 0/2px 100% no-repeat,repeating-linear-gradient(90deg,#605e5c 0 2px,transparent 2px 4px) 0 100%/100% 2px no-repeat}`,
`<div class="p"><pay-chart></pay-chart><region-slicer></region-slicer></div>`);

def('filters-pane',`:host{width:32px;height:508px;background:#fff;${row}flex-direction:column;padding-top:13px}span{writing-mode:vertical-rl;font-weight:600;font-size:14px;letter-spacing:0;margin-top:8px;color:#252423}`,
`${I('dl')}${I('filt',14,12,'margin:16px 0 0 4px')}<span>Filters</span>`);

def('page-tabs',`:host{height:35px;display:flex;background:#f3f2f1}
.v{width:127px;display:flex;border-right:1px solid #a19f9d}.d{width:25px;margin-left:9px;padding:6px 0 0 2px;border-bottom:3px solid #117865;height:30.500px;border-radius:0 0 1px 1px}
.t{width:76.500px;background:#fff;border-right:1px solid #c8c6c4;${row}justify-content:center;padding-top:3px;color:#252423;position:relative}
.on{border-bottom:4px solid #117865;padding-top:7px;font-weight:500}.x{position:absolute;right:3px;top:2px;font-size:11px}
.a{width:40px;background:#117865;color:#fff;${row}justify-content:center}`,
`<div class="v"><div class="d">${I('desk')}</div>${I('phone',14,20,'margin:5px 0 0 24px')}${I('tril',5,8,'margin:14px 0 0 21px')}${I('trir',5,8,'margin:14px 0 0 17px')}</div>`+
[1,2,3,4,5,6].map(n=>`<div class="t${n==4?' on':''}">${T('Page '+n,n==4?37:35.500)}${n==4?'<span class="x">x</span>':''}</div>`).join('')+
`<div class="a"><svg width="10" height="10"><path d="M5 0V10M0 5H10" stroke="#fff" stroke-width="2"/></svg></div>`);

def('pane-header',`:host{height:38px;${row}font-weight:600;font-size:16px;color:#252423;padding-right:8px}.s{flex:1}`,
e=>`${T(e.getAttribute('t'),e.getAttribute('w'))}<div class="s"></div>${I('dots',16,4,'margin-right:7px')}${I('dr')}`);

def('build-pane',`:host{width:181px;background:#f3f2f1;border-left:1px solid #e1dfdd;padding-left:8px;display:flex;flex-direction:column;align-items:flex-start}
.g{width:164px;height:214px;margin-top:3px;border:1px solid #8a8886;background:#fff;padding:2px 0 0 3px;display:grid;grid-template-columns:repeat(6,26px);grid-auto-rows:26px;place-items:center}
.w{width:164px;height:40px;margin-top:3px;padding:4px;border:1px dashed #605e5c}
button{width:100%;height:100%;border:1px solid #605e5c;border-radius:2px;background:#fff;padding:0;font:inherit;color:#252423;display:flex;align-items:center;justify-content:center}`,
`<pane-header t="Build" w="36" style="width:173px"></pane-header>${T('Suggestions',65)}
<div class="g">${'stackbar,stackcol,clusbar,cluscol,bar100,col100,line,area,sarea,area100,linestack,linecol,ribbon,waterfall,funnel,scatter,pie,donut,treemap,globe,fmap,azure,gauge,card,multirow,kpi,slicer,table,matrix,R,Py,keyinf,decomp,qna,narr,trophy,pagin,cardn,slicern,arcgis,papps,automate'.split(',').map(n=>I(n)).join('')}${I('dots',16,4,'margin-bottom:3px')}</div>
${T('Data',24,'margin-top:9px')}<div class="w"><button>${T('+Add data',57)}</button></div>`);

def('data-pane',`:host{width:181px;background:#f3f2f1;border-left:1px solid #e1dfdd;padding-left:4px}
.s{width:172px;height:24px;margin:7px 0 10px;background:#fff;border:1px solid #c8c6c4;border-bottom-color:#605e5c;border-radius:4px;${row}padding-left:11px;color:#605e5c;font-size:13px}
.r{height:24px;${row}padding-left:11px}`,
`<pane-header t="Data" w="34" style="padding-left:4px"></pane-header><div class="s">${I('mag2',15)}${T('Search',42,'margin-left:7px')}</div>`+
[['Bonus',33],['Bonus Rules',64],['Palmoria Group emp-...',123]].map(([t,w])=>`<div class="r">${I('chr')}${I('grid',13,13,'margin:0 5px 0 7px')}${T(t,w)}</div>`).join(''));

def('tool-rail',`:host{width:33px;background:#faf9f8;border-left:1px solid #e1dfdd;display:flex;flex-direction:column}
.i{height:32px;${row}justify-content:center}.on{background:#e1dfdd;border:1px solid #605e5c}.b{margin-top:auto;border-top:1px solid #d2d0ce}`,
`<div class="i on">${I('cyl')}</div><div class="i on">${I('bld')}</div><div class="i">${I('fmt')}</div><div class="i">${I('plus')}</div><div class="i b">${I('gear')}</div>`);

def('status-bar',`:host{height:24px;border-top:1px solid #d8d6d4;background:#f3f2f1;${row}padding:2px 4px 0 4px;color:#484644}
.tr{width:100px;height:12px;margin:0 6px 2px 4px;background:linear-gradient(#605e5c,#605e5c) 31px 1px/4px 10px no-repeat,linear-gradient(#605e5c,#605e5c) 50px 4px/1px 5px no-repeat,linear-gradient(#605e5c,#605e5c) 0 6px/100% 1px no-repeat}`,
`${T('Page 4 of 6',60)}<svg width="5" height="10" style="margin:0 0 2px 898px"><path d="M0 5.500H5" stroke="#484644" stroke-width="1.500"/></svg><div class="tr"></div><svg width="8" height="8" style="margin-bottom:2px"><path d="M4 0V8M0 4H8" stroke="#484644"/></svg>${T('69%',23,'margin:0 0 1px 13px')}${I('fit',16,12,'margin:0 0 1px 19px')}${T('Update available (click to download)',192,'margin:1px 0 0 14px')}`);

def('task-bar',`:host{height:41px;border-top:1px solid #000;background:linear-gradient(90deg,#22343e,#28343a 50%,#2a3034 77%,#1d2d35 88%);color:#fff;${row}}
.s{width:288px;height:40px;margin-left:16px;background:#f2f2f2;border:1px solid #c4c4c4;${row}padding-left:12px;color:#333;font-size:15px}
.a{width:49px;height:40px;${row}justify-content:center;flex:none;position:relative}.tv{width:49px}
.run::after{content:"";position:absolute;left:4.500px;right:4.500px;bottom:0;height:2px;background:#76b9ed}
.act{background:linear-gradient(90deg,transparent 1px,#50595e 1px 45px,#3c464b 45px)}.act::after{left:1px;right:4px}
.ck{display:flex;flex-direction:column;align-items:center;width:52px;gap:1px;margin:0 0 0 8px}`,
`${I('win',16,16,'margin-left:16px')}<div class="s">${I('mag',17,17,'color:#222')}${T('Type here to search',128,'margin-left:10px')}</div><div class="a tv">${I('tview')}</div>`+
[['copilot',22],['outlook',24],['xl',24],['store',23],['ssms',24],['chrome',24,'run'],['folder',24,'run'],['word',24,'run'],['edge',24],['wps',24],['pbi',20,'run act']].map(([n,w,k])=>`<div class="a ${k||''}">${I(n,w)}</div>`).join('')+
`${I('moon',24,24,'margin-left:100px')}${T('24°C',29,'margin-left:8px;font-size:14px')}${I('up',12,8,'margin-left:26px')}${I('batt',15,10,'margin-left:11px')}${I('cloud',17,12,'margin-left:8px')}${I('meet',14,16,'margin-left:9px')}${I('wifi',14,14,'margin-left:11px')}${I('sound',18,14,'margin-left:7px')}<div class="ck">${T('11:35 PM',48)}${T('7/17/2025',52)}</div>${I('notif',16,16,'margin-left:18px')}<div style="width:1px;height:40px;background:#76828a;margin-left:20px"></div>`);

def('report-app',`:host{display:grid;grid-template-rows:34px 32px 94px 543px 24px 41px;width:1366px;height:768px}
.m{display:grid;grid-template-columns:42px 929px 181px 181px 33px;height:543px}.c{display:flex;flex-wrap:wrap;align-content:flex-start}page-tabs{width:929px}`,
`<title-bar></title-bar><ribbon-tabs></ribbon-tabs><ribbon-bar></ribbon-bar><div class="m"><view-rail></view-rail><div class="c"><report-canvas></report-canvas><filters-pane></filters-pane><page-tabs></page-tabs></div><build-pane></build-pane><data-pane></data-pane><tool-rail></tool-rail></div><status-bar></status-bar><task-bar></task-bar>`);

// Text run condensed or stretched to a given advance width.
customElements.define('fit-text',class extends HTMLElement{
 connectedCallback(){ if(this.shadowRoot) return;
  this.attachShadow({mode:'open'}).innerHTML='<style>:host{display:block;flex:none;white-space:nowrap}span{display:inline-block;transform-origin:0 50%}</style><span><slot></slot></span>';
  const s=this.shadowRoot.querySelector('span'),w=+this.getAttribute('w'),n=s.getBoundingClientRect().width;
  this.style.width=w+'px'; if(n&&w) s.style.transform=`scaleX(${w/n})`;}
});
</script>
</body>
</html>
